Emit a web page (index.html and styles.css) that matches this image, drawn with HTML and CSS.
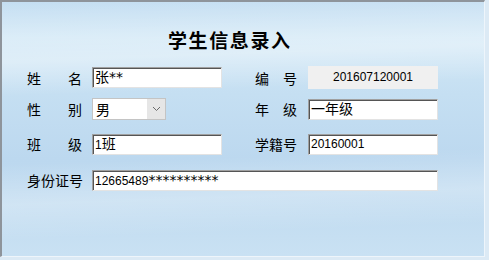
FILE: index.html
```html
<!DOCTYPE html>
<html lang="zh">
<head>
<meta charset="utf-8">
<link rel="stylesheet" href="styles.css">
</head>
<body>
<div class="frame">
  <h1 class="title">学生信息录入</h1>
  <div class="form">
    <div class="label spaced">姓<span>名</span></div>
    <div class="field input cjk">张<span class="mask">**</span></div>
    <div></div>
    <div class="label spaced2">编<span>号</span></div>
    <div class="field readonly">201607120001</div>

    <div class="label spaced">性<span>别</span></div>
    <div class="field"><div class="select"><span class="sel-text">男</span><span class="sel-btn"><svg width="9" height="6" viewBox="0 0 9 6"><path d="M1 1 L4.5 4.5 L8 1" fill="none" stroke="#6a6a6a" stroke-width="1"/></svg></span></div></div>
    <div></div>
    <div class="label spaced2">年<span>级</span></div>
    <div class="field input cjk">一年级</div>

    <div class="label spaced">班<span>级</span></div>
    <div class="field input cjk"><span class="num">1</span>班</div>
    <div></div>
    <div class="label">学籍号</div>
    <div class="field input">20160001</div>

    <div class="label">身份证号</div>
    <div class="field input wide">12665489<span class="mask">**********</span></div>
  </div>
</div>
</body>
</html>
```

FILE: styles.css
```css
html, body {
  margin: 0;
  padding: 0;
  width: 489px;
  height: 260px;
  overflow: hidden;
  background: #dceaf5;
}
.frame {
  box-sizing: border-box;
  width: 485px;
  height: 257px;
  border-top: 2px solid #8e949b;
  border-left: 2px solid #8e949b;
  border-right: 1px solid #eef5fb;
  border-bottom: 1px solid #eef5fb;
  background:
    linear-gradient(178deg, rgba(255,255,255,0) 0%, rgba(255,255,255,0.35) 22%, rgba(255,255,255,0) 35%, rgba(255,255,255,0) 60%, rgba(255,255,255,0.25) 75%, rgba(255,255,255,0) 88%),
    linear-gradient(180deg, #c4def2 0%, #d2e8f6 14%, #c5dff2 36%, #bcd8ef 62%, #c3ddf1 85%, #c9e1f3 100%);
  font-family: "Noto Sans CJK SC", sans-serif;
  color: #000;
}
.title {
  margin: 26px 0 0 166px;
  font-size: 19px;
  line-height: 24px;
  font-weight: bold;
  letter-spacing: 1.6px;
  font-family: "Noto Sans CJK SC", serif;
}
.form {
  margin: 11px 0 0 25px;
  display: grid;
  grid-template-columns: 65px 130px 33px 53px 130px;
  grid-template-rows: 29px 34px 36px 36px;
  align-items: center;
}
.label {
  font-size: 14px;
  line-height: 18px;
  white-space: nowrap;
}
.spaced span { margin-left: 27px; }
.spaced2 span { margin-left: 14px; }
.field {
  box-sizing: border-box;
  font-size: 12px;
  font-family: "Liberation Sans", "Noto Sans CJK SC", sans-serif;
}
.cjk {
  font-size: 14px;
}
.cjk .num {
  font-size: 12px;
}
.mask {
  font-family: "DejaVu Sans", sans-serif;
  font-size: 14px;
}
.input {
  height: 21px;
  line-height: 18px;
  background: #fff;
  border-top: 1px solid #a0a0a0;
  border-left: 1px solid #a0a0a0;
  border-right: 1px solid #e3e3e3;
  border-bottom: 1px solid #e3e3e3;
  box-shadow: inset 1px 1px 0 #555;
  padding-left: 2px;
  white-space: nowrap;
}
.wide { grid-column: 2 / 6; }
.readonly {
  height: 23px;
  line-height: 22px;
  background: #f0f0f0;
  text-align: center;
  font-size: 12px;
}
.select {
  box-sizing: border-box;
  width: 74px;
  height: 22px;
  border: 1px solid #c4c4c4;
  background: #fff;
  display: flex;
  align-items: center;
  justify-content: space-between;
}
.sel-text {
  font-size: 14px;
  padding-left: 3px;
  font-family: "Noto Sans CJK SC", sans-serif;
}
.sel-btn {
  width: 18px;
  height: 20px;
  background: #e6e6e6;
  display: flex;
  align-items: center;
  justify-content: center;
}
```
